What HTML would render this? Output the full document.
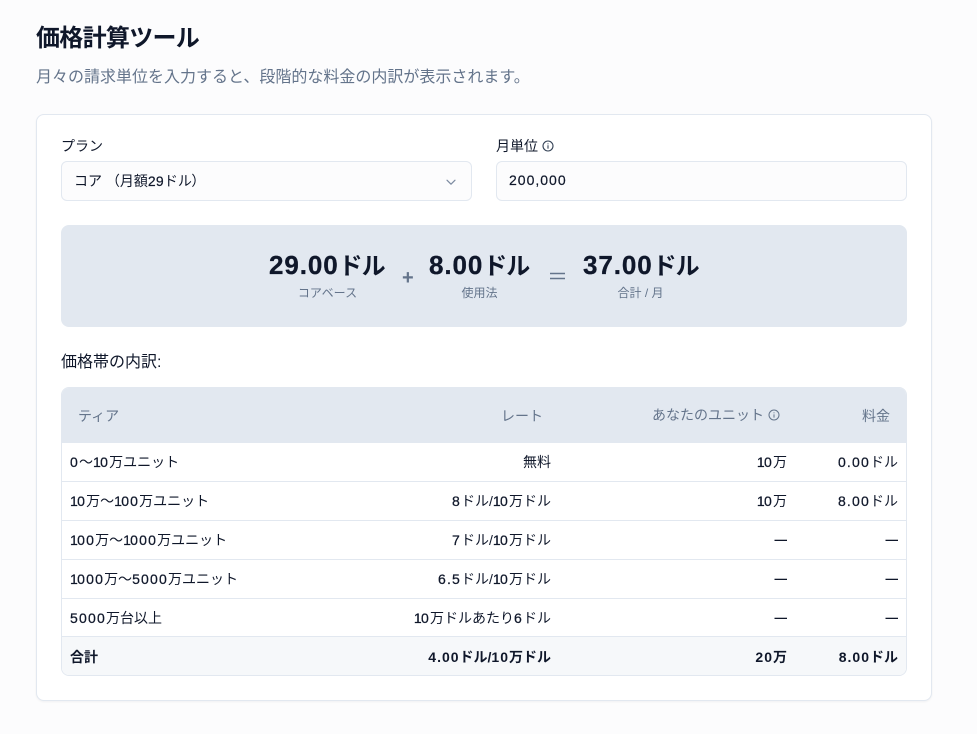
<!DOCTYPE html>
<html lang="ja"><head><meta charset="utf-8"><title>価格計算ツール</title>
<style>
*{box-sizing:border-box;margin:0;padding:0}
html,body{width:977px;height:734px;overflow:hidden;background:#fcfcfd}
body{position:relative;font-family:"Liberation Sans","Noto Sans CJK JP",sans-serif;color:#0f172a;font-size:14px}
.a{position:absolute;white-space:nowrap;line-height:20px}
.n{letter-spacing:1px;-webkit-text-stroke:.2px #0f172a}
h1{position:absolute;left:36px;top:23px;font-size:24px;line-height:32px;font-weight:700;letter-spacing:-.7px;color:#0f172a;white-space:nowrap}
.sub{left:36px;top:67px;font-size:16px;line-height:22px;color:#64748b}
.card{position:absolute;left:36px;top:114px;width:896px;height:587px;background:#fff;border:1px solid #e2e8f0;border-radius:8px;box-shadow:0 1px 2px rgba(15,23,42,.05)}
.field{position:absolute;top:161px;height:40px;width:411px;background:#fcfcfd;border:1px solid #e2e8f0;border-radius:6px}
.sum{position:absolute;left:61px;top:225px;width:846px;height:102px;background:#e2e8f0;border-radius:8px}
.big{font-size:26px;line-height:32px;font-weight:700}
.big b{letter-spacing:.9px;-webkit-text-stroke:.3px #0f172a}
.big span{font-size:24px;letter-spacing:-1px}
.cap{font-size:12px;line-height:16px;color:#64748b;text-align:center}
.op{font-size:20px;line-height:24px;color:#64748b;font-weight:700}
.tw{position:absolute;left:61px;top:387px;width:846px;height:289px;border:1px solid #e2e8f0;border-radius:8px;overflow:hidden;background:#fff}
.head{position:absolute;left:0;top:0;width:100%;height:55px;background:#e2e8f0}
.line{position:absolute;left:0;width:100%;height:1px;background:#e2e8f0}
.tot{position:absolute;left:0;top:248px;width:100%;height:40px;background:#f6f8fa;border-top:1px solid #e2e8f0}
.th{color:#64748b;font-size:14px}
.r{text-align:right}
.td{font-size:14px}
.td b{font-weight:400;letter-spacing:1.2px;-webkit-text-stroke:.25px #0f172a}
.td i{font-style:normal;letter-spacing:-.7px}
.dash{font-weight:700;font-size:12.5px}
.t{font-weight:700}
.t b{font-weight:700;letter-spacing:1px;-webkit-text-stroke:0}
svg{position:absolute;display:block}
</style></head><body>
<h1>価格計算ツール</h1>
<div class="a sub">月々の請求単位を入力すると、段階的な料金の内訳が表示されます。</div>
<div class="card"></div>

<div class="a" style="left:61px;top:136px">プラン</div>
<div class="field" style="left:61px"></div>
<div class="a" style="left:74px;top:171px">コア （月額<span class="n" style="letter-spacing:.2px">29</span>ドル<span style="margin-left:-.5px">）</span></div>
<svg style="left:444px;top:175px" width="14" height="14" viewBox="0 0 14 14" fill="none" stroke="#7c8aa0" stroke-width="1.2" stroke-linecap="round" stroke-linejoin="round"><path d="M3 5.2l4 4 4-4"/></svg>

<div class="a" style="left:496px;top:136px">月単位</div>
<svg style="left:542px;top:140px" width="12" height="12" viewBox="0 0 12 12" fill="none" stroke="#334155" stroke-width="1.1" stroke-linecap="round"><circle cx="6" cy="6" r="5"/><path d="M6 5.7v2.6M6 3.8v.1"/></svg>
<div class="field" style="left:496px"></div>
<div class="a n" style="left:509px;top:170px">200,000</div>

<div class="sum"></div>
<div class="a big" style="left:269px;top:249px"><b>29.00</b><span>ドル</span></div>
<div class="a cap" style="left:269px;top:285px;width:117px">コアベース</div>
<div class="a op" style="left:402px;top:266px">+</div>
<div class="a big" style="left:429px;top:249px"><b>8.00</b><span>ドル</span></div>
<div class="a cap" style="left:429px;top:285px;width:101px">使用法</div>
<svg style="left:550px;top:270px" width="15" height="12" viewBox="0 0 15 12" stroke="#64748b" stroke-width="1.5"><path d="M0 3.5h15M0 8.5h15"/></svg>
<div class="a big" style="left:583px;top:249px"><b>37.00</b><span>ドル</span></div>
<div class="a cap" style="left:583px;top:285px;width:115px">合計 / 月</div>

<div class="a" style="left:61px;top:352px;font-size:16px;line-height:22px">価格帯の内訳:</div>

<div class="tw">
<div class="head"></div>
<div class="line" style="top:93px"></div>
<div class="line" style="top:132px"></div>
<div class="line" style="top:171px"></div>
<div class="line" style="top:210px"></div>
<div class="tot"></div>
</div>

<div class="a th" style="left:78px;top:406px">ティア</div>
<div class="a th r" style="right:434px;top:406px">レート</div>
<div class="a th r" style="right:213px;top:405px">あなたのユニット</div>
<svg style="left:768px;top:409px" width="12" height="12" viewBox="0 0 12 12" fill="none" stroke="#64748b" stroke-width="1" stroke-linecap="round"><circle cx="6" cy="6" r="5"/><path d="M6 5.7v2.6M6 3.8v.1"/></svg>
<div class="a th r" style="right:87px;top:406px">料金</div>

<div class="a td" style="left:70px;top:452px"><b>0</b>〜<b><i>1</i>0</b>万ユニット</div>
<div class="a td r" style="right:426px;top:452px">無料</div>
<div class="a td r" style="right:190px;top:452px"><b><i>1</i>0</b>万</div>
<div class="a td r" style="right:79px;top:452px"><b>0.00</b>ドル</div>

<div class="a td" style="left:70px;top:491px"><b><i>1</i>0</b>万〜<b><i>1</i>00</b>万ユニット</div>
<div class="a td r" style="right:426px;top:491px"><b>8</b>ドル/<b><i>1</i>0</b>万ドル</div>
<div class="a td r" style="right:190px;top:491px"><b><i>1</i>0</b>万</div>
<div class="a td r" style="right:79px;top:491px"><b>8.00</b>ドル</div>

<div class="a td" style="left:70px;top:530px"><b><i>1</i>00</b>万〜<b><i>1</i>000</b>万ユニット</div>
<div class="a td r" style="right:426px;top:530px"><b>7</b>ドル/<b><i>1</i>0</b>万ドル</div>
<div class="a td r dash" style="right:190px;top:530px">—</div>
<div class="a td r dash" style="right:79px;top:530px">—</div>

<div class="a td" style="left:70px;top:569px"><b><i>1</i>000</b>万〜<b>5000</b>万ユニット</div>
<div class="a td r" style="right:426px;top:569px"><b>6.5</b>ドル/<b><i>1</i>0</b>万ドル</div>
<div class="a td r dash" style="right:190px;top:569px">—</div>
<div class="a td r dash" style="right:79px;top:569px">—</div>

<div class="a td" style="left:70px;top:608px"><b>5000</b>万台以上</div>
<div class="a td r" style="right:426px;top:608px"><b><i>1</i>0</b>万ドルあたり<b>6</b>ドル</div>
<div class="a td r dash" style="right:190px;top:608px">—</div>
<div class="a td r dash" style="right:79px;top:608px">—</div>

<div class="a td t" style="left:70px;top:647px">合計</div>
<div class="a td t r" style="right:426px;top:647px"><b>4.00</b>ドル/<b>10</b>万ドル</div>
<div class="a td t r" style="right:190px;top:647px"><b>20</b>万</div>
<div class="a td t r" style="right:79px;top:647px"><b>8.00</b>ドル</div>
</body></html>
